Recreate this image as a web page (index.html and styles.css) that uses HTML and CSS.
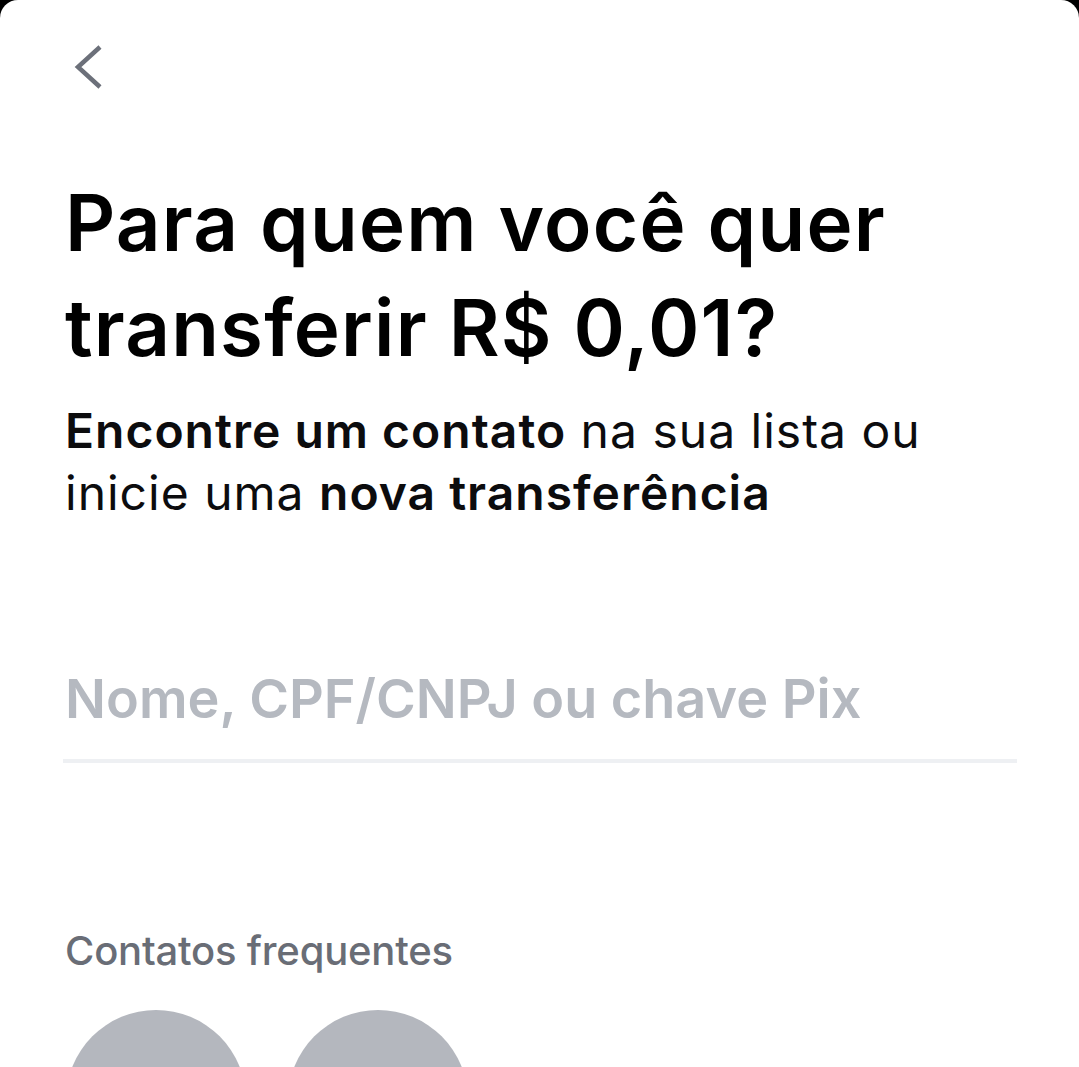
FILE: index.html
```html
<!DOCTYPE html>
<html lang="pt-BR">
<head>
<meta charset="utf-8">
<link rel="stylesheet" href="styles.css">
</head>
<body>
<div class="screen">
  <button class="back" aria-label="Voltar">
    <svg width="40" height="48" viewBox="0 0 40 48"><path d="M32 3 L10 23 L32 43" fill="none" stroke="#6c707a" stroke-width="4.5" stroke-linecap="butt" stroke-linejoin="miter"/></svg>
  </button>
  <h1 class="title">Para quem você quer transferir R$ 0,01?</h1>
  <p class="subtitle"><strong>Encontre um contato</strong> na sua lista ou inicie uma <strong>nova transferência</strong></p>
  <div class="field">
    <input class="search" type="text" placeholder="Nome, CPF/CNPJ ou chave Pix">
  </div>
  <h2 class="section">Contatos frequentes</h2>
  <div class="contacts">
    <div class="avatar"></div>
    <div class="avatar"></div>
  </div>
</div>
</body>
</html>
```
FILE: styles.css
```css
html, body {
  margin: 0;
  padding: 0;
  background: #000;
  height: 100%;
  overflow: hidden;
}
.screen {
  background: #fff;
  height: 1067px;
  overflow: hidden;
  border-radius: 18px 18px 0 0;
  padding: 44px 62px 0 65px;
  box-sizing: border-box;
  font-family: Inter, "Noto Sans", sans-serif;
  color: #000;
}
.back {
  display: block;
  border: 0;
  background: none;
  padding: 0;
  margin: 0 0 0 3px;
  width: 40px;
  height: 48px;
}
.back svg { display: block; }
.title {
  margin: 78px 0 0;
  font-size: 78px;
  line-height: 105px;
  font-weight: 600;
  letter-spacing: 1.2px;
  width: 900px;
}
.subtitle {
  margin: 20px 0 0;
  font-size: 48px;
  line-height: 62px;
  font-weight: 400;
  letter-spacing: 1px;
  color: #0c0c0e;
}
.subtitle strong { font-weight: 600; }
.field {
  margin-top: 140px;
  border-bottom: 4px solid #eef0f3;
  padding-bottom: 25px;
  margin-left: -2px;
}
.search {
  display: block;
  width: 100%;
  border: 0;
  outline: none;
  padding: 0 0 0 2px;
  margin: 0;
  font-family: Inter, "Noto Sans", sans-serif;
  font-size: 54px;
  font-weight: 600;
  line-height: 70px;
  height: 70px;
  color: #111;
  background: transparent;
}
.search::placeholder { color: #b5b9c0; opacity: 1; }
.section {
  margin: 163px 0 0;
  font-size: 40px;
  line-height: 50px;
  font-weight: 500;
  letter-spacing: -0.2px;
  color: #696d76;
}
.contacts {
  display: flex;
  gap: 42px;
  margin-top: 34px;
  padding-left: 1px;
}
.avatar {
  width: 180px;
  height: 180px;
  border-radius: 50%;
  background: #b4b7be;
  flex: none;
}
```
